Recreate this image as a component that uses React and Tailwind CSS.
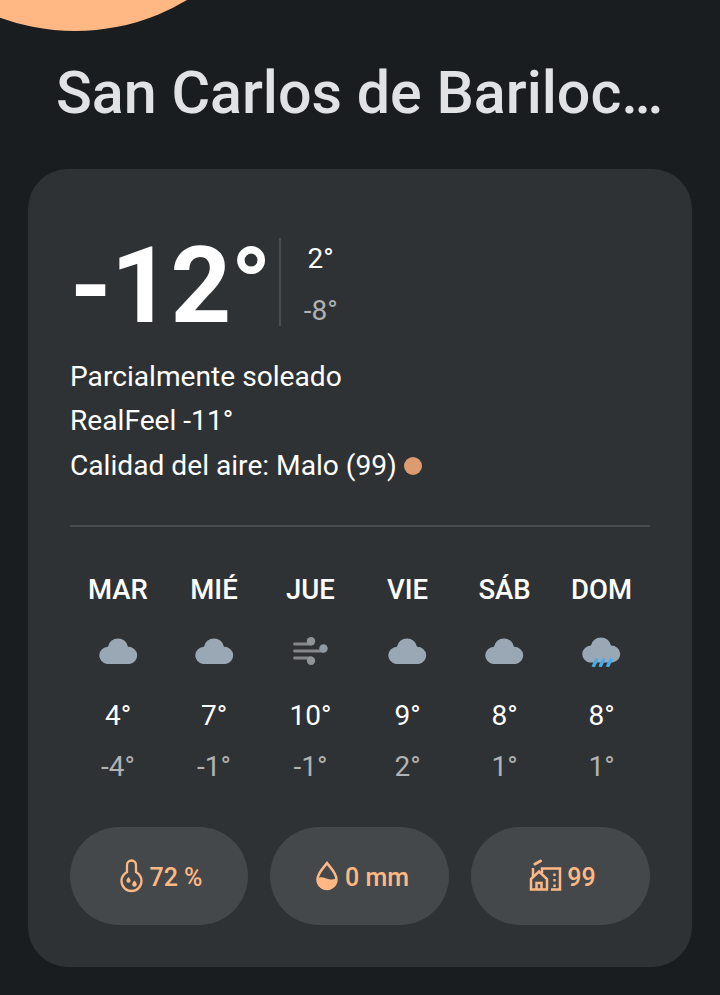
const days = [
  { name: 'MAR', icon: 'cloud', hi: '4°', lo: '-4°' },
  { name: 'MIÉ', icon: 'cloud', hi: '7°', lo: '-1°' },
  { name: 'JUE', icon: 'wind', hi: '10°', lo: '-1°' },
  { name: 'VIE', icon: 'cloud', hi: '9°', lo: '2°' },
  { name: 'SÁB', icon: 'cloud', hi: '8°', lo: '1°' },
  { name: 'DOM', icon: 'rain', hi: '8°', lo: '1°' },
];

const CLOUD = 'M8.5 25.5A8.5 8.5 0 0 1 9.5 8.6A9.6 9.6 0 0 1 28.5 8.6A8.5 8.5 0 0 1 30 25.5Z';

function Cloud() {
  return (
    <svg width="39" height="27" viewBox="1 0 37 26.5" preserveAspectRatio="none" className="block">
      <path d={CLOUD} fill="#9aa8b5" />
    </svg>
  );
}

function Wind() {
  return (
    <svg width="39" height="30" viewBox="0 0 39 30" className="block">
      <g stroke="#858789" strokeWidth="2.8" strokeLinecap="round">
        <path d="M3.5 7H20" />
        <path d="M3.5 14H32" />
        <path d="M3.5 21H20" />
      </g>
      <circle cx="20" cy="4.3" r="4.2" fill="#8f9498" />
      <circle cx="32.5" cy="11.5" r="4.2" fill="#8f9aa5" />
      <circle cx="20" cy="23.7" r="4.2" fill="#8f9498" />
    </svg>
  );
}

function Rain() {
  return (
    <svg width="39" height="30" viewBox="1 0 37 30" preserveAspectRatio="none" className="block">
      <path d={CLOUD} fill="#9aa8b5" />
      <g stroke="#49abe8" strokeWidth="3.2">
        <path d="M15.5 21.5L11.5 30" />
        <path d="M22 21.5L18 30" />
        <path d="M29 21.5L25 30" />
      </g>
    </svg>
  );
}

function HumidityIcon() {
  return (
    <svg width="31" height="36" viewBox="0 0 31 36" fill="none" className="block">
      <path
        d="M12 14V7A4.5 4.5 0 0 1 21 7V14C24.5 16 26.5 19 26.5 23C26.5 28.5 22 33 16.5 33C11 33 6.5 28.5 6.5 23C6.5 19 8.5 16 12 14Z"
        stroke="#ffb884"
        strokeWidth="2.3"
      />
      <path d="M13.5 19C14.6 20.5 15.6 21.6 15.6 22.7A2.1 2.1 0 0 1 11.4 22.7C11.4 21.6 12.4 20.5 13.5 19Z" fill="#ffb884" />
      <path d="M19.5 22.5C20.8 24.1 21.8 25.2 21.8 26.4A2.3 2.3 0 0 1 17.2 26.4C17.2 25.2 18.2 24.1 19.5 22.5Z" fill="#ffb884" />
    </svg>
  );
}

function DropIcon() {
  return (
    <svg width="32" height="36" viewBox="0 0 32 36" fill="none" className="block">
      <path
        d="M17 5C13.5 10 7.5 15 7.5 21.5A9.5 9.5 0 0 0 26.5 21.5C26.5 15 20.5 10 17 5Z"
        stroke="#ffb884"
        strokeWidth="2.4"
      />
      <path
        d="M7.5 20.5C11.5 18 14 19.5 17 20.8C20 22 23 22 26.5 20C27.5 27 22.5 32 17 32C11.5 32 6.5 27.5 7.5 20.5Z"
        fill="#ffb884"
      />
    </svg>
  );
}

function AirIcon() {
  return (
    <svg width="39" height="36" viewBox="0 0 39 36" fill="none" className="block">
      <g stroke="#ffb884" strokeWidth="2.5">
        <path d="M6 31.5H22V21L14 13.5L6 21Z" />
        <path d="M11.5 31.5V25H16.5V31.5" />
        <path d="M8 19V10" />
        <path d="M17 15V10.5H35V31.5H26" />
      </g>
      <path d="M29.5 15.5V18M29.5 21V23.5M29.5 26.5V29" stroke="#ffb884" strokeWidth="2.4" />
      <path d="M10 6L15.5 3" stroke="#ffb884" strokeWidth="3" strokeLinecap="round" />
    </svg>
  );
}

function Stat({ icon, label }) {
  return (
    <div className="flex h-[98px] items-center justify-center gap-[3px] rounded-[49px] bg-[#44484b] text-[25px] font-medium text-[#ffb884]">
      {icon}
      <span className="pt-[4px]">{label}</span>
    </div>
  );
}

export default function App() {
  return (
    <div className="relative h-[995px] w-[720px] overflow-hidden bg-[#1a1d20] font-['Roboto',sans-serif]">
      {/* sun behind the header */}
      <div className="absolute left-[-143px] top-[-405px] h-[436px] w-[436px] rounded-full bg-[#ffb884]" />

      <h1 className="relative truncate px-[56px] pt-[57px] text-center text-[59.2px] leading-[72px] font-medium text-[#e1e2e3]">
        San Carlos de Bariloche
      </h1>

      <main className="mx-[28px] mt-[40px] h-[798px] rounded-[40px] bg-[#2f3234] px-[42px] pt-[68px]">
        <div className="flex items-center">
          <div className="h-[90px] text-[106px] leading-[98px] font-bold tracking-[-1px] text-white">-12°</div>
          <div className="ml-[8px] flex h-[88px] flex-col items-center justify-between border-l-2 border-[#494c4f] pl-[23px] pt-[6px] text-[28px] leading-[30px]">
            <span className="text-white">2°</span>
            <span className="text-[#b0b2b3]">-8°</span>
          </div>
        </div>

        <div className="mt-[32px] flex flex-col gap-[8.3px] text-[28.15px] leading-[36px] text-white">
          <div>Parcialmente soleado</div>
          <div>RealFeel -11°</div>
          <div className="flex items-center">
            Calidad del aire: Malo (99)
            <span className="ml-[7px] h-[18px] w-[18px] rounded-full bg-[#dc9b70]" />
          </div>
        </div>

        <div className="mt-[41px] border-t-2 border-[#494c4f]" />

        <div className="mt-[45px] grid grid-cols-[96px_96px_97px_97px_97px_97px]">
          {days.map((d) => (
            <div key={d.name} className="flex flex-col items-center">
              <div className="text-[27.5px] leading-[36px] font-medium text-white">{d.name}</div>
              <div className="mt-[26px] flex h-[36px] items-center justify-center">
                {d.icon === 'cloud' && <Cloud />}
                {d.icon === 'wind' && <Wind />}
                {d.icon === 'rain' && <Rain />}
              </div>
              <div className="mt-[28px] text-[28px] leading-[36px] text-white">{d.hi}</div>
              <div className="mt-[15px] text-[28px] leading-[36px] text-[#b0b2b3]">{d.lo}</div>
            </div>
          ))}
        </div>

        <div className="mt-[42px] grid grid-cols-[178px_179px_179px] gap-[22px]">
          <Stat icon={<HumidityIcon />} label="72 %" />
          <Stat icon={<DropIcon />} label="0 mm" />
          <Stat icon={<AirIcon />} label="99" />
        </div>
      </main>
    </div>
  );
}
